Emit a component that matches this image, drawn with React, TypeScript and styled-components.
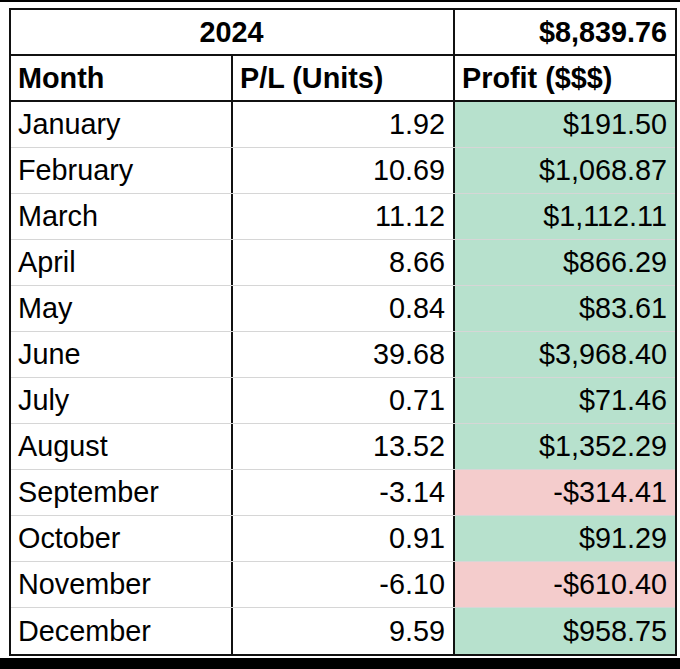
import React from "react";
import styled, { createGlobalStyle } from "styled-components";

const Global = createGlobalStyle`
  html, body { margin: 0; padding: 0; background: #ffffff; }
  body { font-family: "Liberation Sans", Arial, sans-serif; }
`;

const Page = styled.div`
  width: 680px;
  height: 669px;
  display: flex;
  flex-direction: column;
  background: #ffffff;
  overflow: hidden;
`;

const BlackBar = styled.div<{ $h: number }>`
  height: ${(p) => p.$h}px;
  background: #000000;
  flex: none;
`;

const Sheet = styled.div`
  flex: none;
  padding: 6px 3px 2px 9px;
`;

const Table = styled.div`
  width: 668px;
  box-sizing: border-box;
  border: 2px solid #111;
  display: flex;
  flex-direction: column;
`;

const Row = styled.div<{ $head?: boolean; $last?: boolean }>`
  display: grid;
  grid-template-columns: 220px 2px 220px 2px 220px;
  height: 46px;
  box-sizing: border-box;
  border-bottom: ${(p) =>
    p.$last ? "none" : p.$head ? "2px solid #111" : "1px solid #d6d6d6"};
`;

const Divider = styled.div`
  background: #111;
`;

const Cell = styled.div<{
  $align?: "left" | "right" | "center";
  $bold?: boolean;
  $bg?: string;
  $span?: number;
}>`
  grid-column: ${(p) => (p.$span ? `span ${p.$span}` : "auto")};
  display: flex;
  align-items: center;
  justify-content: ${(p) =>
    p.$align === "right" ? "flex-end" : p.$align === "center" ? "center" : "flex-start"};
  padding: 0 8px 0 7px;
  background: ${(p) => p.$bg || "transparent"};
  font-size: 28.8px;
  font-weight: ${(p) => (p.$bold ? 700 : 400)};
  color: #000;
  white-space: nowrap;
  overflow: hidden;
`;

const GREEN = "#b7e1cd";
const RED = "#f4cccc";

const data: [string, string, string][] = [
  ["January", "1.92", "$191.50"],
  ["February", "10.69", "$1,068.87"],
  ["March", "11.12", "$1,112.11"],
  ["April", "8.66", "$866.29"],
  ["May", "0.84", "$83.61"],
  ["June", "39.68", "$3,968.40"],
  ["July", "0.71", "$71.46"],
  ["August", "13.52", "$1,352.29"],
  ["September", "-3.14", "-$314.41"],
  ["October", "0.91", "$91.29"],
  ["November", "-6.10", "-$610.40"],
  ["December", "9.59", "$958.75"],
];

export default function App() {
  return (
    <Page>
      <Global />
      <BlackBar $h={2} />
      <Sheet>
        <Table>
          <Row $head>
            <Cell $span={3} $align="center" $bold>
              2024
            </Cell>
            <Divider />
            <Cell $align="right" $bold>
              $8,839.76
            </Cell>
          </Row>
          <Row $head>
            <Cell $bold>Month</Cell>
            <Divider />
            <Cell $bold>P/L (Units)</Cell>
            <Divider />
            <Cell $bold>Profit ($$$)</Cell>
          </Row>
          {data.map(([m, u, p], i) => (
            <Row key={m} $last={i === data.length - 1}>
              <Cell>{m}</Cell>
              <Divider />
              <Cell $align="right">{u}</Cell>
              <Divider />
              <Cell $align="right" $bg={p.startsWith("-") ? RED : GREEN}>
                {p}
              </Cell>
            </Row>
          ))}
        </Table>
      </Sheet>
      <BlackBar $h={11} />
    </Page>
  );
}
